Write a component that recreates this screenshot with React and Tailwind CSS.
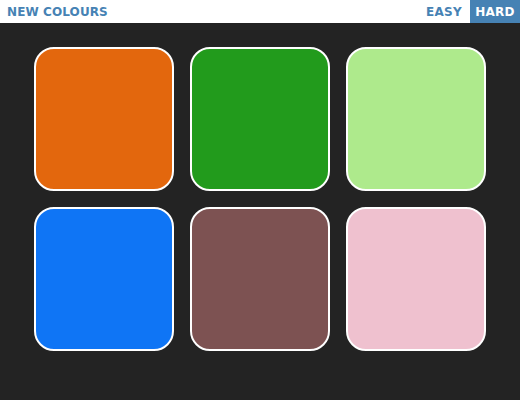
import React, { useState } from "react";

const colours = ["#e3670d", "#229b1c", "#aeea8c", "#0f75f5", "#7d5252", "#efc1cf"];

const App = () => {
  const [mode, setMode] = useState("hard");

  return (
    <div className="w-[520px] h-[400px] bg-[#232323] font-['Liberation_Sans',sans-serif]">
      <div className="h-[23px] bg-white flex items-stretch font-['DejaVu_Sans',sans-serif]">
        <button className="pl-[7px] text-[12px] font-bold tracking-[0.1px] text-[#4682b4] uppercase">
          New Colours
        </button>
        <div className="ml-auto flex">
          <button
            onClick={() => setMode("easy")}
            className={`px-[8px] text-[12px] font-bold tracking-[0.3px] uppercase ${
              mode === "easy" ? "bg-[#4682b4] text-white" : "text-[#4682b4]"
            }`}
          >
            Easy
          </button>
          <button
            onClick={() => setMode("hard")}
            className={`w-[50px] text-[12px] font-bold tracking-[0.3px] uppercase ${
              mode === "hard" ? "bg-[#4682b4] text-white" : "text-[#4682b4]"
            }`}
          >
            Hard
          </button>
        </div>
      </div>

      <div className="pt-[24px] grid grid-cols-[repeat(3,140px)] gap-x-[16px] gap-y-[16px] justify-center">
        {colours.map((c) => (
          <div
            key={c}
            className="w-[140px] h-[144px] rounded-[20px] border-2 border-white"
            style={{ backgroundColor: c }}
          />
        ))}
      </div>
    </div>
  );
};

export default App;
